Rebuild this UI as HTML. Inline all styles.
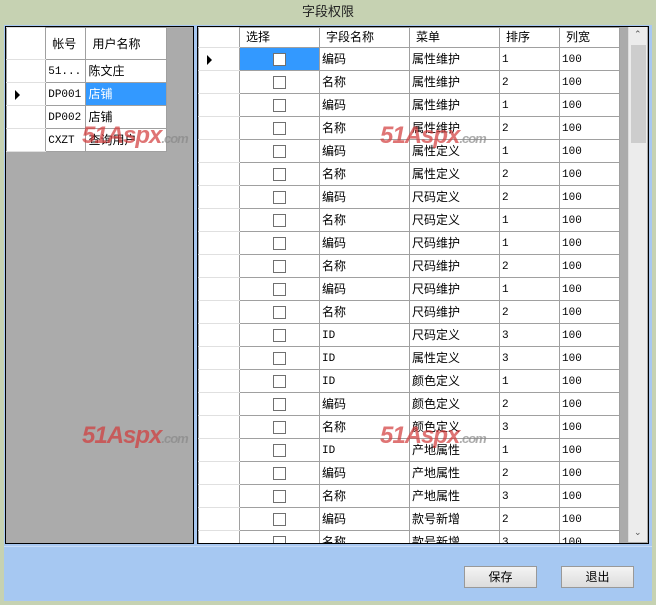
<!DOCTYPE html>
<html><head><meta charset="utf-8"><style>
*{margin:0;padding:0;box-sizing:border-box}
body{width:656px;height:605px;background:#c6d2b2;font-family:"Liberation Sans","Noto Sans CJK SC",sans-serif;font-size:12px;position:relative;overflow:hidden;color:#000}
.title{position:absolute;left:0;top:0;width:656px;height:24px;text-align:center;line-height:24px;font-size:13px;color:#222}
.client{position:absolute;left:4px;top:25px;width:648px;height:576px;background:#a8c8f2}
.foot{position:absolute;left:4px;top:546px;width:648px;height:54px;background:#a6c8f2;border-top:1px solid #c8dcf6}
.grid{position:absolute;background:#ababab;border:1px solid #000;overflow:hidden}
table{border-collapse:collapse;position:absolute;left:0;top:0;table-layout:fixed}
tr{height:23px}
td{border:1px solid #a0a0a0;height:23px;line-height:20px;padding:0 2px;white-space:nowrap;overflow:hidden;background:#fff;vertical-align:middle}
tr.h td{background:#fff;padding-left:6px}
td.rh{background:#fff;border-color:#e0e0e0 #a0a0a0}
.n{font-family:"Liberation Mono",monospace;font-size:11px;padding-top:3px;line-height:17px}
.sel{background:#3399ff!important;color:#fff}
.cb{display:block;margin:0 auto;width:13px;height:13px;border:1px solid #707070;background:#fff}
.arrow{display:inline-block;width:0;height:0;border-top:5px solid transparent;border-bottom:5px solid transparent;border-left:5px solid #000;margin-left:6px;vertical-align:middle}
.sb{position:absolute;left:430px;top:0;width:19px;height:515px;background:#ececec;border-left:1px solid #ddd}
.thumb{position:absolute;left:2px;top:18px;width:15px;height:98px;background:#cdcdcd}
.btn{position:absolute;width:73px;height:22px;border:1px solid #999;background:linear-gradient(#f4f4f4,#dcdcdc);text-align:center;line-height:20px;font-size:12px}
.wm{position:absolute;font:italic bold 24px "Liberation Sans",sans-serif;color:#d23a3a;opacity:.7;letter-spacing:-1px}
.wm span{color:#888;font-size:13px;font-weight:bold}
</style></head><body>
<div class="title">字段权限</div>
<div class="client"></div>
<div class="grid" style="left:5px;top:26px;width:189px;height:518px">
<table style="width:161px">
<colgroup><col style="width:39px"><col style="width:40px"><col style="width:80px"></colgroup>
<tr class="h" style="height:32px"><td class="rh" style="height:32px"></td><td style="height:32px">帐号</td><td style="height:32px">用户名称</td></tr>
<tr><td class="rh"></td><td class="n">51...</td><td>陈文庄</td></tr>
<tr><td class="rh"><span class="arrow"></span></td><td class="n">DP001</td><td class="sel">店铺</td></tr>
<tr><td class="rh"></td><td class="n">DP002</td><td>店铺</td></tr>
<tr><td class="rh"></td><td class="n">CXZT</td><td>查询用户</td></tr>
</table></div>
<div class="grid" style="left:197px;top:26px;width:452px;height:518px">
<table style="width:421px">
<colgroup><col style="width:41px"><col style="width:80px"><col style="width:90px"><col style="width:90px"><col style="width:60px"><col style="width:60px"></colgroup>
<tr class="h" style="height:20px"><td class="rh" style="height:20px;line-height:17px"></td><td style="height:20px;line-height:17px">选择</td><td style="height:20px;line-height:17px">字段名称</td><td style="height:20px;line-height:17px">菜单</td><td style="height:20px;line-height:17px">排序</td><td style="height:20px;line-height:17px">列宽</td></tr>
<tr><td class="rh"><span class="arrow"></span></td><td class="sel"><span class="cb"></span></td><td>编码</td><td>属性维护</td><td class="n">1</td><td class="n">100</td></tr>
<tr><td class="rh"></td><td><span class="cb"></span></td><td>名称</td><td>属性维护</td><td class="n">2</td><td class="n">100</td></tr>
<tr><td class="rh"></td><td><span class="cb"></span></td><td>编码</td><td>属性维护</td><td class="n">1</td><td class="n">100</td></tr>
<tr><td class="rh"></td><td><span class="cb"></span></td><td>名称</td><td>属性维护</td><td class="n">2</td><td class="n">100</td></tr>
<tr><td class="rh"></td><td><span class="cb"></span></td><td>编码</td><td>属性定义</td><td class="n">1</td><td class="n">100</td></tr>
<tr><td class="rh"></td><td><span class="cb"></span></td><td>名称</td><td>属性定义</td><td class="n">2</td><td class="n">100</td></tr>
<tr><td class="rh"></td><td><span class="cb"></span></td><td>编码</td><td>尺码定义</td><td class="n">2</td><td class="n">100</td></tr>
<tr><td class="rh"></td><td><span class="cb"></span></td><td>名称</td><td>尺码定义</td><td class="n">1</td><td class="n">100</td></tr>
<tr><td class="rh"></td><td><span class="cb"></span></td><td>编码</td><td>尺码维护</td><td class="n">1</td><td class="n">100</td></tr>
<tr><td class="rh"></td><td><span class="cb"></span></td><td>名称</td><td>尺码维护</td><td class="n">2</td><td class="n">100</td></tr>
<tr><td class="rh"></td><td><span class="cb"></span></td><td>编码</td><td>尺码维护</td><td class="n">1</td><td class="n">100</td></tr>
<tr><td class="rh"></td><td><span class="cb"></span></td><td>名称</td><td>尺码维护</td><td class="n">2</td><td class="n">100</td></tr>
<tr><td class="rh"></td><td><span class="cb"></span></td><td class="n">ID</td><td>尺码定义</td><td class="n">3</td><td class="n">100</td></tr>
<tr><td class="rh"></td><td><span class="cb"></span></td><td class="n">ID</td><td>属性定义</td><td class="n">3</td><td class="n">100</td></tr>
<tr><td class="rh"></td><td><span class="cb"></span></td><td class="n">ID</td><td>颜色定义</td><td class="n">1</td><td class="n">100</td></tr>
<tr><td class="rh"></td><td><span class="cb"></span></td><td>编码</td><td>颜色定义</td><td class="n">2</td><td class="n">100</td></tr>
<tr><td class="rh"></td><td><span class="cb"></span></td><td>名称</td><td>颜色定义</td><td class="n">3</td><td class="n">100</td></tr>
<tr><td class="rh"></td><td><span class="cb"></span></td><td class="n">ID</td><td>产地属性</td><td class="n">1</td><td class="n">100</td></tr>
<tr><td class="rh"></td><td><span class="cb"></span></td><td>编码</td><td>产地属性</td><td class="n">2</td><td class="n">100</td></tr>
<tr><td class="rh"></td><td><span class="cb"></span></td><td>名称</td><td>产地属性</td><td class="n">3</td><td class="n">100</td></tr>
<tr><td class="rh"></td><td><span class="cb"></span></td><td>编码</td><td>款号新增</td><td class="n">2</td><td class="n">100</td></tr>
<tr><td class="rh"></td><td><span class="cb"></span></td><td>名称</td><td>款号新增</td><td class="n">3</td><td class="n">100</td></tr>
</table>
<div class="sb"><div class="thumb"></div>
<div style="position:absolute;left:5px;top:2px;font-size:9px;color:#555">&#8963;</div>
<div style="position:absolute;left:5px;top:500px;font-size:9px;color:#555">&#8964;</div></div>
</div>
<div class="foot"></div>
<div class="btn" style="left:464px;top:566px">保存</div>
<div class="btn" style="left:561px;top:566px">退出</div>
<div class="wm" style="left:82px;top:122px">51Aspx<span>.com</span></div>
<div class="wm" style="left:380px;top:122px">51Aspx<span>.com</span></div>
<div class="wm" style="left:82px;top:422px">51Aspx<span>.com</span></div>
<div class="wm" style="left:380px;top:422px">51Aspx<span>.com</span></div>
</body></html>
